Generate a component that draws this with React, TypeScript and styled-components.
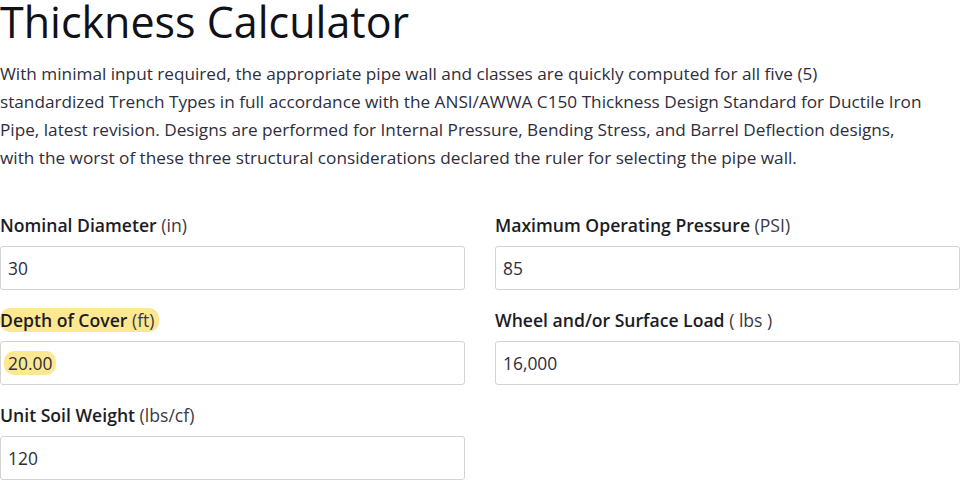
import React from "react"
import styled, { createGlobalStyle } from "styled-components"

const GlobalStyle = createGlobalStyle`
  html, body {
    margin: 0;
    padding: 0;
    background: #ffffff;
  }
  body {
    font-family: "Open Sans", "Noto Sans", sans-serif;
    color: #2b2b38;
    overflow: hidden;
  }
`

type Field = {
  name: string
  unit: string
  value: string
  marked?: boolean
}

const fields: Field[] = [
  { name: "Nominal Diameter", unit: "(in)", value: "30" },
  { name: "Maximum Operating Pressure", unit: "(PSI)", value: "85" },
  { name: "Depth of Cover", unit: "(ft)", value: "20.00", marked: true },
  { name: "Wheel and/or Surface Load", unit: "( lbs )", value: "16,000" },
  { name: "Unit Soil Weight", unit: "(lbs/cf)", value: "120" },
]

const introLines = [
  "With minimal input required, the appropriate pipe wall and classes are quickly computed for all five (5)",
  "standardized Trench Types in full accordance with the ANSI/AWWA C150 Thickness Design Standard for Ductile Iron",
  "Pipe, latest revision. Designs are performed for Internal Pressure, Bending Stress, and Barrel Deflection designs,",
  "with the worst of these three structural considerations declared the ruler for selecting the pipe wall.",
]

export default function App() {
  return (
    <>
      <GlobalStyle />
      <Page>
        <Title>Thickness Calculator</Title>
        <Intro>
          {introLines.map((line, i) => (
            <IntroLine key={i}>{line}</IntroLine>
          ))}
        </Intro>
        <Form>
          {fields.map(f => (
            <FieldGroup key={f.name}>
              <Label>
                {f.marked ? (
                  <Highlight>
                    {f.name} <Unit>{f.unit}</Unit>
                  </Highlight>
                ) : (
                  <>
                    {f.name} <Unit>{f.unit}</Unit>
                  </>
                )}
              </Label>
              <InputBox>
                {f.marked ? <ValueMark>{f.value}</ValueMark> : f.value}
              </InputBox>
            </FieldGroup>
          ))}
        </Form>
      </Page>
    </>
  )
}

const Page = styled.div`
  width: 960px;
`

const Title = styled.h1`
  margin: 0;
  font-size: 43px;
  font-weight: 400;
  line-height: 43px;
  color: #111118;
`

const Intro = styled.p`
  margin: 17px 0 0;
  font-size: 17.2px;
  line-height: 28px;
  color: #2e2e3c;
`

const IntroLine = styled.span`
  display: block;
  white-space: nowrap;
`

const Form = styled.div`
  display: grid;
  grid-template-columns: 1fr 1fr;
  column-gap: 30px;
  row-gap: 18px;
  margin-top: 41px;
`

const FieldGroup = styled.div`
  display: flex;
  flex-direction: column;
`

const Label = styled.div`
  font-size: 17.6px;
  line-height: 24px;
  font-weight: 600;
  color: #1c1c26;
  margin-bottom: 9px;
`

const Unit = styled.span`
  font-weight: 400;
  color: #3a3a46;
`

const Highlight = styled.span`
  background: #fce891;
  border-radius: 10px;
  padding: 0 4px 0 0;
`

const InputBox = styled.div`
  box-sizing: border-box;
  height: 44px;
  padding: 0 7px;
  display: flex;
  align-items: center;
  border: 1px solid #d3d3d6;
  border-radius: 3px;
  font-size: 17.4px;
  color: #2e2e3c;
`

const ValueMark = styled.span`
  background: #fce891;
  border-radius: 10px;
  padding: 0 4px;
  margin-left: -4px;
`
